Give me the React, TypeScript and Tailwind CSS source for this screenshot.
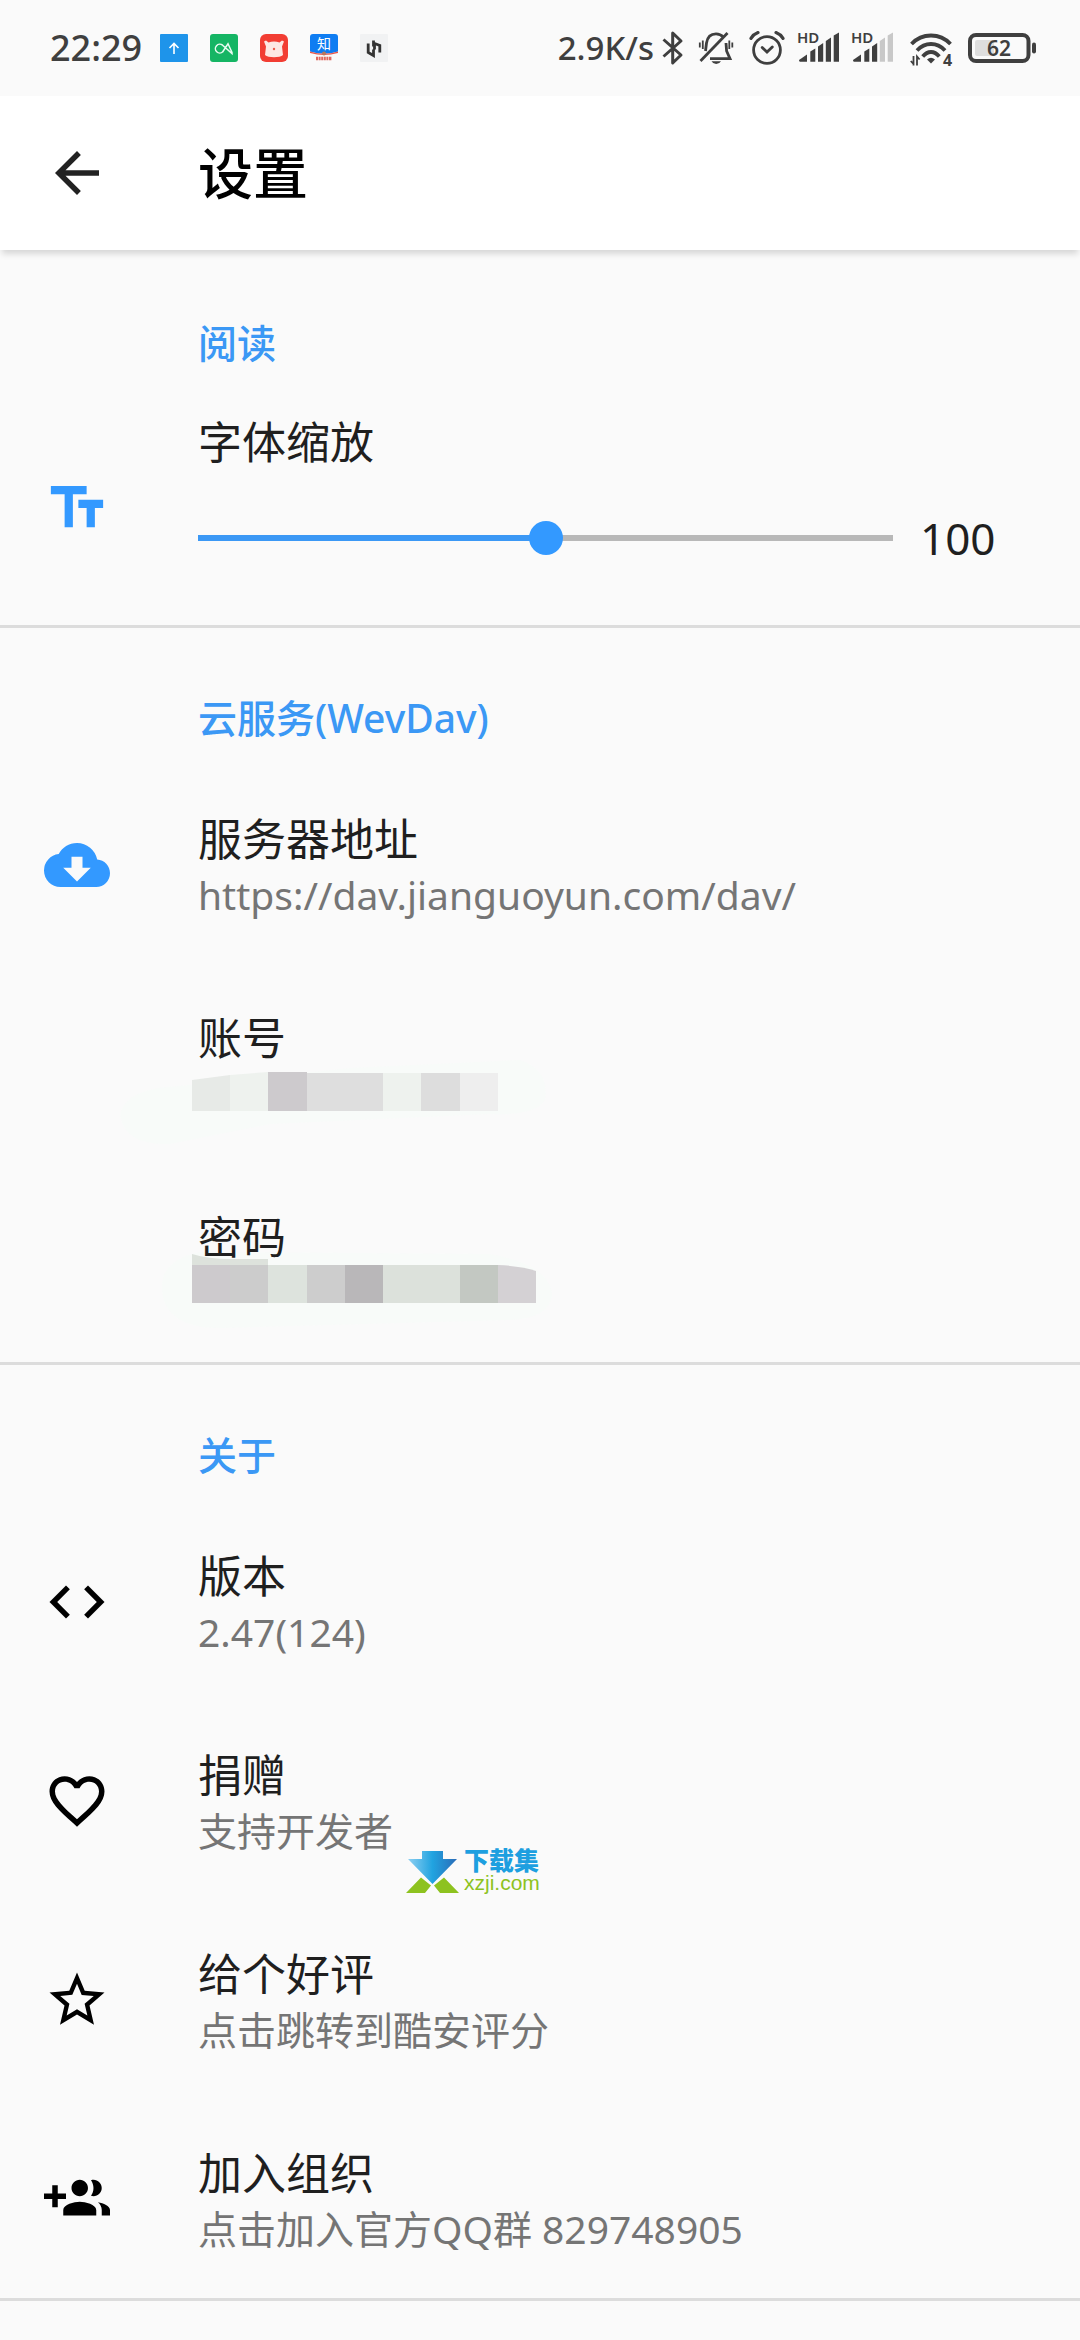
import { useState } from 'react';
import type { CSSProperties, ReactNode } from 'react';
import { MdArrowBack, MdCloudDownload, MdCode, MdFavoriteBorder, MdStarBorder, MdTextFields } from 'react-icons/md';

const INK = '#3f3f3f';

function NotificationIcons() {
  return (
    <div className="flex gap-[22px]">
      <svg width="28" height="28" viewBox="0 0 28 28">
        <rect width="28" height="28" rx="1" fill="#1e94ea" />
        <path d="M14 20V9.5M9.5 14 14 9.5l4.5 4.5" fill="none" stroke="#fff" strokeWidth="1.6" />
      </svg>
      <svg width="28" height="28" viewBox="0 0 28 28">
        <rect width="28" height="28" rx="3" fill="#15b564" />
        <path d="M12.8 17.8A4.4 4.4 0 1 1 12.6 11.2L22 19.500V18.500L18 9.800 12.600 18" fill="none" stroke="#e9fbf1" strokeWidth="1.5" />
      </svg>
      <svg width="28" height="28" viewBox="0 0 28 28">
        <rect width="28" height="28" rx="6" fill="#f23d33" />
        <path d="M4 7.5 6 6.5 8.500 8.500C12 7 16 7 19.500 8.500L22 6.500 24 7.500 22 12.500 23 21C20 24 8 24 5 21L6 12.500Z" fill="#fde7e3" />
        <circle cx="14" cy="15" r="1.2" fill="#ee5a4a" />
      </svg>
      <svg width="28" height="28" viewBox="0 0 28 28">
        <path d="M3 0H25a3 3 0 0 1 3 3V17.5Q14 22 0 17.5V3a3 3 0 0 1 3-3Z" fill="#0f7df2" />
        <path d="M0 17.500Q14 22 28 17.500V19Q14 23 0 19Z" fill="#e8574a" />
        <circle cx="14" cy="19.500" r="2" fill="#b9785a" />
        <text x="14" y="15" textAnchor="middle" fontSize="14" fill="#fff">知</text>
        <path d="M6 24.500h16" stroke="#e0685e" strokeWidth="3.500" strokeDasharray="2 .6" />
      </svg>
      <svg width="28" height="28" viewBox="0 0 28 28">
        <rect width="28" height="28" rx="1" fill="#f1f2f3" />
        <path d="M8.200 9.500V18.500L13.500 21.500V15.500M13.500 12.500V6.500M19.800 18.500V11.500L14.500 9.500V15.500" fill="none" stroke="#333" strokeWidth="2.800" />
      </svg>
    </div>
  );
}

function Signal({ weak = false }: { weak?: boolean }) {
  const off = weak ? '#c8c8c8' : INK;
  return (
    <svg width="42" height="36" viewBox="0 0 42 36" className="overflow-visible">
      <text x="-1" y="12.500" fontSize="15" fontWeight="600" fill={INK}>HD</text>
      <path d="M1 30 9 24.500V31.700H2Q1 31.700 1 30Z" fill={INK} />
      <path d="M12.300 21.500 17.300 18.500V31.700H12.300Z" fill={INK} />
      <path d="M20 16.500 25.200 13V31.700H20Z" fill={INK} />
      <path d="M27.800 11 33 7.500V31.700H27.800Z" fill={off} />
      <path d="M35.700 5.500 41 2.500V31.700H35.700Z" fill={off} />
    </svg>
  );
}

function StatusBar() {
  return (
    <div className="flex h-24 items-center justify-between pr-11 pl-[50px] text-[#3f3f3f]">
      <div className="flex items-center gap-[18px]">
        <span className="text-[36px] leading-[48px] font-medium">22:29</span>
        <NotificationIcons />
      </div>
      <div className="flex items-center">
        <span className="mr-2 text-[33px] leading-[48px] font-medium">2.9K/s</span>
        <svg width="22" height="36" viewBox="0 0 22 36" className="mr-[15px]">
          <path d="M1.500 9.500 19 25l-8.300 8V3L19 11 1.500 26.500" fill="none" stroke={INK} strokeWidth="3" strokeLinejoin="round" />
        </svg>
        <svg width="34" height="36" viewBox="0 0 34 36" className="mr-4 overflow-visible" fill="none" stroke={INK}>
          <path d="M6.500 21 7.500 13C8.500 6.500 12 3.800 17 3.800 20 3.800 22.500 5 24.300 7M27 13l.6 8 3.400 7.700H11" strokeWidth="2.800" />
          <path d="M1.500 31 28.500 3" strokeWidth="2.800" />
          <path d="M12.500 31.300h9.500q-1.500 2.700-4.800 2.700t-4.700-2.700z" fill={INK} stroke="none" />
          <path d="M.8 12.500v5M3.800 10.500v8.500M30.300 10.500v8.500M33.300 12.500v5" strokeWidth="1.800" />
        </svg>
        <svg width="36" height="36" viewBox="0 0 36 36" className="mr-[13px]" fill="none" stroke={INK} strokeLinecap="round">
          <circle cx="18" cy="20" r="13.400" strokeWidth="2.800" />
          <path d="m13.200 17.500 4.800 4.600 5.300-5.200" strokeWidth="2.800" />
          <path d="M2 8.300Q4.500 4.300 9 2.600M27 2.600Q31.500 4.300 34 8.300" strokeWidth="3.200" />
        </svg>
        <Signal />
        <span className="w-3" />
        <Signal weak />
        <svg width="44" height="36" viewBox="0 0 44 36" className="mr-[14px] ml-4 overflow-visible">
          <g fill="none" stroke={INK} strokeWidth="3.800">
            <path d="M1.500 14Q9.500 5.500 21 5.500T40.500 14" />
            <path d="M7 20.500Q13 14 21 14t14 6.500" />
            <path d="M12.700 26.500Q16.500 22 21 22t8.300 4.500" />
          </g>
          <path d="M17 29.500Q21 26 25 29.500L21 33.500Z" fill={INK} />
          <path d="M3.500 26v9.500M.8 31l2.700 3M7 35.500V26.500l2.600 3" fill="none" stroke={INK} strokeWidth="1.800" />
          <text x="33" y="36" fontSize="16" fontWeight="700" fill={INK}>4</text>
        </svg>
        <svg width="68" height="36" viewBox="0 0 68 36">
          <rect x="2" y="5" width="58.500" height="26" rx="6" fill="none" stroke={INK} strokeWidth="4" />
          <rect x="7" y="10" width="19" height="16" rx="2" fill="#dedede" />
          <rect x="64" y="12.500" width="4" height="11" rx="2" fill={INK} />
          <text x="31" y="25.500" textAnchor="middle" fontSize="21" fontWeight="600" fill={INK}>62</text>
        </svg>
      </div>
    </div>
  );
}

function GroupAddIcon() {
  return (
    <svg viewBox="0 0 24 24" fill="currentColor" className="size-[66px]">
      <path d="M8 10H5V7H3v3H0v2h3v3h2v-3h3v-2zm10 1c1.660 0 2.990-1.340 2.990-3S19.660 5 18 5c-.32 0-.63.05-.91.14.57.81.9 1.790.9 2.860s-.34 2.040-.9 2.860c.28.09.59.14.91.14zm-5 0c1.660 0 2.990-1.340 2.990-3S14.660 5 13 5s-3 1.340-3 3 1.340 3 3 3zm6.620 2.160c.83.73 1.380 1.660 1.380 2.840v2h3v-2c0-1.540-2.370-2.490-4.380-2.840zM13 13c-2 0-6 1-6 3v2h12v-2c0-2-4-3-6-3z" />
    </svg>
  );
}

// Pixelated blocks that hide the private values
function MaskedAccount() {
  return (
    <svg width="430" height="90" viewBox="0 0 430 90" className="absolute -top-[9px] -left-[78px]">
      <path d="M0 55Q5 28 60 26L230 8 400 0Q430 10 425 40 415 56 370 54L150 64 50 84Q5 86 0 55Z" fill="#f8fbf9" />
      <path d="M72 20 110 15V51H72Z" fill="#e7eae7" />
      <path d="M110 15 148 12V51H110Z" fill="#eef2ee" />
      <path d="M148 12H187V51H148Z" fill="#cdcacd" />
      <path d="M187 13H263V51H187Z" fill="#dedede" />
      <path d="M263 13H301V51H263Z" fill="#eef2ee" />
      <path d="M301 13H340V51H301Z" fill="#dddddd" />
      <path d="M340 13H378V51H340Z" fill="#eeeeee" />
    </svg>
  );
}

function MaskedPassword() {
  return (
    <svg width="400" height="90" viewBox="0 0 400 90" className="absolute -top-[28px] -left-[38px]">
      <path d="M2 50Q0 20 40 12L330 14Q390 25 392 55 390 78 350 80L60 88Q5 88 2 50Z" fill="#f8fbf9" />
      <path d="M32 14Q48 19 70 19H108V25H32Z" fill="#dde2dc" />
      <path d="M32 25H70V63H32Z" fill="#cdcacd" />
      <path d="M70 25H108V63H70Z" fill="#cccccc" />
      <path d="M108 25H147V63H108Z" fill="#dde3dd" />
      <path d="M147 25H185V63H147Z" fill="#cdcdcd" />
      <path d="M185 25H223V63H185Z" fill="#b9b7b9" />
      <path d="M223 25H300V63H223Z" fill="#dce1db" />
      <path d="M300 25H338V63H300Z" fill="#c3c8c2" />
      <path d="M338 25Q362 26 376 31V63H338Z" fill="#d4d1d4" />
    </svg>
  );
}

function Watermark() {
  return (
    <div className="pointer-events-none absolute top-[150px] left-[406px] flex gap-[5px]">
      <svg width="53" height="42" viewBox="0 0 53 42">
        <defs>
          <linearGradient id="drop" x1="0" y1="0" x2="1" y2="0">
            <stop offset="0" stopColor="#8ed0f2" />
            <stop offset=".5" stopColor="#21a3e0" />
            <stop offset="1" stopColor="#2a6cb8" />
          </linearGradient>
        </defs>
        <path d="M16 0H37V8H51L26.500 33 2 8H16Z" fill="url(#drop)" />
        <path d="M15 26.500 25 34.500 19 42H0ZM38 26.500 28 34.500 34 42H53Z" fill="#8dc21f" />
      </svg>
      <div className="font-['Liberation_Sans','Noto_Sans_CJK_SC',sans-serif]">
        <p className="text-[25px] leading-[20px] font-black text-[#1d9fe0]">下载集</p>
        <p className="text-[21px] leading-[24px] text-[#8dc21f]">xzji.com</p>
      </div>
    </div>
  );
}

function Section({ title, children }: { title: string; children: ReactNode }) {
  return (
    <section className="border-b-[3px] border-[#dcdcdc]">
      <h2 className="pt-16 pb-[21px] pl-[198px] text-[39px] leading-[52px] font-medium text-[#3b98f5]">{title}</h2>
      {children}
    </section>
  );
}

type RowProps = { title: string; summary: ReactNode; icon?: ReactNode };

function Row({ title, summary, icon }: RowProps) {
  return (
    <button type="button" className="flex w-full items-center py-11 pl-11 text-left">
      <span className="w-[154px] shrink-0 text-black">{icon}</span>
      <span className="min-w-0 flex-1">
        <span className="relative z-10 block text-[44px] leading-[61px] text-[#1f1f1f]">{title}</span>
        <span className="relative block h-[50px] text-[39px] leading-[50px] text-[#757575]">{summary}</span>
      </span>
    </button>
  );
}

export default function App() {
  const [zoom, setZoom] = useState(100);
  const fill = { '--fill': `${zoom / 2}%` } as CSSProperties;

  return (
    <div className="min-h-screen bg-[#fafafa] font-['Noto_Sans','Noto_Sans_CJK_SC',sans-serif]">
      <StatusBar />

      <header className="flex h-[154px] items-center bg-white pl-11 shadow-[0_6px_6px_-2px_rgba(0,0,0,0.14)]">
        <button type="button" aria-label="返回" className="w-[154px] text-[#222]">
          <MdArrowBack size={66} />
        </button>
        <h1 className="text-[55px] leading-[74px] font-medium text-black">设置</h1>
      </header>

      <main className="pt-[3px]">
        <Section title="阅读">
          <div className="flex items-center py-[22px] pl-11">
            <MdTextFields size={66} className="mr-[88px] shrink-0 text-[#3399ff]" />
            <div className="flex-1">
              <label htmlFor="font-zoom" className="block text-[44px] leading-[61px] text-[#1f1f1f]">字体缩放</label>
              <div className="flex h-[130px] items-center gap-[27px]">
                <input
                  id="font-zoom"
                  type="range"
                  min={0}
                  max={200}
                  value={zoom}
                  onChange={(e) => setZoom(Number(e.target.value))}
                  style={fill}
                  className="h-[34px] min-w-0 flex-1 appearance-none bg-transparent [&::-webkit-slider-runnable-track]:h-[6px] [&::-webkit-slider-runnable-track]:bg-[linear-gradient(to_right,#3b98f5_var(--fill),#b8b8b8_var(--fill))] [&::-webkit-slider-thumb]:-mt-[14px] [&::-webkit-slider-thumb]:size-[34px] [&::-webkit-slider-thumb]:appearance-none [&::-webkit-slider-thumb]:rounded-full [&::-webkit-slider-thumb]:bg-[#3399ff]"
                />
                <output htmlFor="font-zoom" className="w-40 text-[44px] leading-[61px] text-[#1f1f1f]">{zoom}</output>
              </div>
            </div>
          </div>
        </Section>

        <Section title="云服务(WevDav)">
          <Row
            title="服务器地址"
            summary="https://dav.jianguoyun.com/dav/"
            icon={<MdCloudDownload size={66} className="text-[#3399ff]" />}
          />
          <Row title="账号" summary={<MaskedAccount />} />
          <Row title="密码" summary={<MaskedPassword />} />
        </Section>

        <Section title="关于">
          <Row title="版本" summary="2.47(124)" icon={<MdCode size={66} />} />
          <div className="relative">
            <Row title="捐赠" summary="支持开发者" icon={<MdFavoriteBorder size={66} />} />
            <Watermark />
          </div>
          <Row title="给个好评" summary="点击跳转到酷安评分" icon={<MdStarBorder size={66} />} />
          <Row title="加入组织" summary="点击加入官方QQ群 829748905" icon={<GroupAddIcon />} />
        </Section>
      </main>
    </div>
  );
}
